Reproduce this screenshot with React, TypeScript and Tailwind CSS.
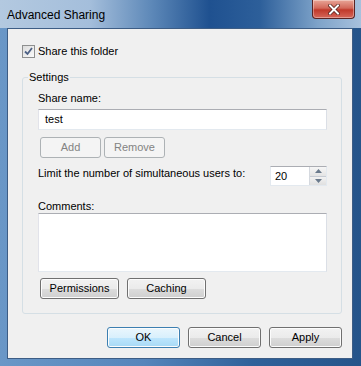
import { ReactNode } from 'react';

const font = "font-['Liberation_Sans',Arial,sans-serif]";

function Btn({ children, w, disabled, primary }: { children: ReactNode; w: string; disabled?: boolean; primary?: boolean }) {
  if (disabled) {
    return (
      <div className={`${w} h-[21px] flex items-center justify-center rounded-[3px] border border-[#adb2b5] bg-[#f4f4f4] text-[11px] text-[#838383]`}>
        {children}
      </div>
    );
  }
  return (
    <div
      className={`${w} h-[21px] flex items-center justify-center rounded-[3px] border text-[11px] text-black shadow-[inset_0_0_0_1px_#fcfcfc] ${
        primary
          ? 'border-[#3c7fb1] bg-[linear-gradient(to_bottom,#eaf6fd_0%,#d9f0fc_50%,#bee6fd_50%,#a7d9f5_100%)]'
          : 'border-[#707070] bg-[linear-gradient(to_bottom,#f2f2f2_0%,#ebebeb_50%,#dddddd_50%,#cfcfcf_100%)]'
      }`}
    >
      {children}
    </div>
  );
}

function TextBox({ children, h }: { children?: ReactNode; h: string }) {
  return (
    <div className={`${h} w-full bg-white border border-[#e3e9ef] border-t-[#abadb3] border-l-[#e2e3ea] border-r-[#dbdfe6] px-[6px] flex items-center text-[11px]`}>
      {children}
    </div>
  );
}

export default function App() {
  return (
    <div className={`${font} w-[361px] h-[366px] flex flex-col bg-[linear-gradient(to_right,#6a97c7_0%,#5585bb_40%,#2f619a_70%,#25548a_100%)]`}>
      {/* title bar */}
      <div className="h-[28px] flex items-start justify-between pl-[7px] pr-[6px] bg-[linear-gradient(to_right,#b3c9e0_0%,#a4bedb_25%,#5d88b8_42%,#1f5190_58%,#2d5f9a_72%,#7ea3c9_88%,#a7c1dd_100%)]">
        <span className="mt-[6px] text-[12px] leading-[18px] text-black">Advanced Sharing</span>
        <div className="w-[43px] h-[19px] rounded-b-[4px] border border-t-0 border-[#5a2424] bg-[linear-gradient(to_bottom,#e8a597_0%,#d2685a_45%,#c0392b_55%,#d6675a_100%)] flex items-center justify-center shadow-[inset_0_0_0_1px_rgba(255,255,255,0.35)]">
          <svg width="12" height="11" viewBox="0 0 12 11">
            <path d="M2 1.5 L10 9.5 M10 1.5 L2 9.5" stroke="#4a1a14" strokeWidth="3.4" strokeLinecap="square" />
            <path d="M2 1.5 L10 9.5 M10 1.5 L2 9.5" stroke="#ffffff" strokeWidth="2" strokeLinecap="square" />
          </svg>
        </div>
      </div>

      {/* client area */}
      <div className="flex-1 ml-[7px] mr-[8px] mb-[7px] border border-[#3d5d85] bg-[#f0f0f0] pl-[14px] pr-[10px] pt-[15px] text-[11px] text-black">
        <label className="flex items-center h-[15px] gap-[3px]">
          <span className="w-[13px] h-[13px] border border-[#8e8f8f] bg-[linear-gradient(135deg,#dcdcdc,#fbfbfb)] flex items-center justify-center">
            <svg width="9" height="9" viewBox="0 0 9 9">
              <path d="M1 4.5 L3.5 7 L8 1" stroke="#4d6185" strokeWidth="1.8" fill="none" />
            </svg>
          </span>
          <span>Share this folder</span>
        </label>

        <fieldset className="mt-[11px] border border-[#d5dfe5] rounded-[3px] w-[320px]">
          <legend className="ml-[5px] px-[1px] leading-[15px]">Settings</legend>
          <div className="pl-[15px] pr-[14px] pb-[14px] flex flex-col">
            <div className="mt-[6px] leading-[15px]">Share name:</div>
            <div className="mt-[3px]">
              <TextBox h="h-[21px]">test</TextBox>
            </div>
            <div className="mt-[7px] pl-[2px] flex gap-[3px]">
              <Btn w="w-[61px]" disabled>Add</Btn>
              <Btn w="w-[61px]" disabled>Remove</Btn>
            </div>
            <div className="mt-[8px] flex items-start justify-between">
              <span className="leading-[15px]">Limit the number of simultaneous users to:</span>
              <div className="w-[57px] h-[20px] bg-white border border-[#e3e9ef] border-t-[#abadb3] flex items-center justify-between">
                <span className="pl-[4px]">20</span>
                <div className="w-[17px] h-full flex flex-col border-l border-[#d5d9df]">
                  <div className="flex-1 flex items-center justify-center bg-[linear-gradient(to_bottom,#f6f6f6,#e4e4e4)] border-b border-[#c7ccd4]">
                    <svg width="7" height="4" viewBox="0 0 7 4"><path d="M0 4 L3.5 0 L7 4 Z" fill="#6a7a8c" /></svg>
                  </div>
                  <div className="flex-1 flex items-center justify-center bg-[linear-gradient(to_bottom,#f2f2f2,#e0e0e0)]">
                    <svg width="7" height="4" viewBox="0 0 7 4"><path d="M0 0 L3.5 4 L7 0 Z" fill="#6a7a8c" /></svg>
                  </div>
                </div>
              </div>
            </div>
            <div className="mt-[14px] leading-[13px]">Comments:</div>
            <TextBox h="h-[59px]" />
            <div className="mt-[6px] pl-[2px] flex gap-[8px]">
              <Btn w="w-[79px]">Permissions</Btn>
              <Btn w="w-[79px]">Caching</Btn>
            </div>
          </div>
        </fieldset>

        <div className="mt-[13px] flex justify-end gap-[8px]">
          <Btn w="w-[73px]" primary>OK</Btn>
          <Btn w="w-[73px]">Cancel</Btn>
          <Btn w="w-[73px]">Apply</Btn>
        </div>
      </div>
    </div>
  );
}
